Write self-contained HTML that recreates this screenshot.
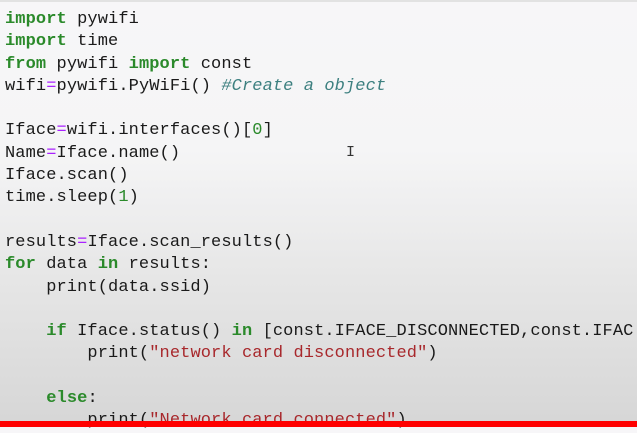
<!DOCTYPE html>
<html><head><style>
html,body{margin:0;padding:0;}
body{width:637px;height:427px;overflow:hidden;position:relative;
background:linear-gradient(#f7f6f8 0px,#f5f5f6 150px,#e6e6e6 280px,#d6d6d6 427px);}
.top{position:absolute;left:0;top:0;width:637px;height:2px;background:#e2e2e2}
pre{position:absolute;left:5px;top:9px;margin:0;font-family:"Liberation Mono",monospace;font-size:17px;line-height:22.3px;color:#1a1a1a;letter-spacing:0.1px}
.k{color:#2b8a2b;font-weight:bold}
.c{color:#3d8080;font-style:italic}
.s{color:#a8282c}
.o{color:#aa22ff}
.n{color:#2b8a2b}
.bar{position:absolute;left:0;top:421px;width:637px;height:6px;background:#f00}
.cur{position:absolute;left:346px;top:144px;font-family:"Liberation Mono",monospace;font-size:15px;color:#333}
</style></head><body>
<div class="top"></div>
<pre><span class="k">import</span> pywifi
<span class="k">import</span> time
<span class="k">from</span> pywifi <span class="k">import</span> const
wifi<span class="o">=</span>pywifi.PyWiFi() <span class="c">#Create a object</span>

Iface<span class="o">=</span>wifi.interfaces()[<span class="n">0</span>]
Name<span class="o">=</span>Iface.name()
Iface.scan()
time.sleep(<span class="n">1</span>)

results<span class="o">=</span>Iface.scan_results()
<span class="k">for</span> data <span class="k">in</span> results:
    print(data.ssid)

    <span class="k">if</span> Iface.status() <span class="k">in</span> [const.IFACE_DISCONNECTED,const.IFAC
        print(<span class="s">"network card disconnected"</span>)

    <span class="k">else</span>:
        print(<span class="s">"Network card connected"</span>)</pre>
<div class="cur">I</div>
<div class="bar"></div>
</body></html>
